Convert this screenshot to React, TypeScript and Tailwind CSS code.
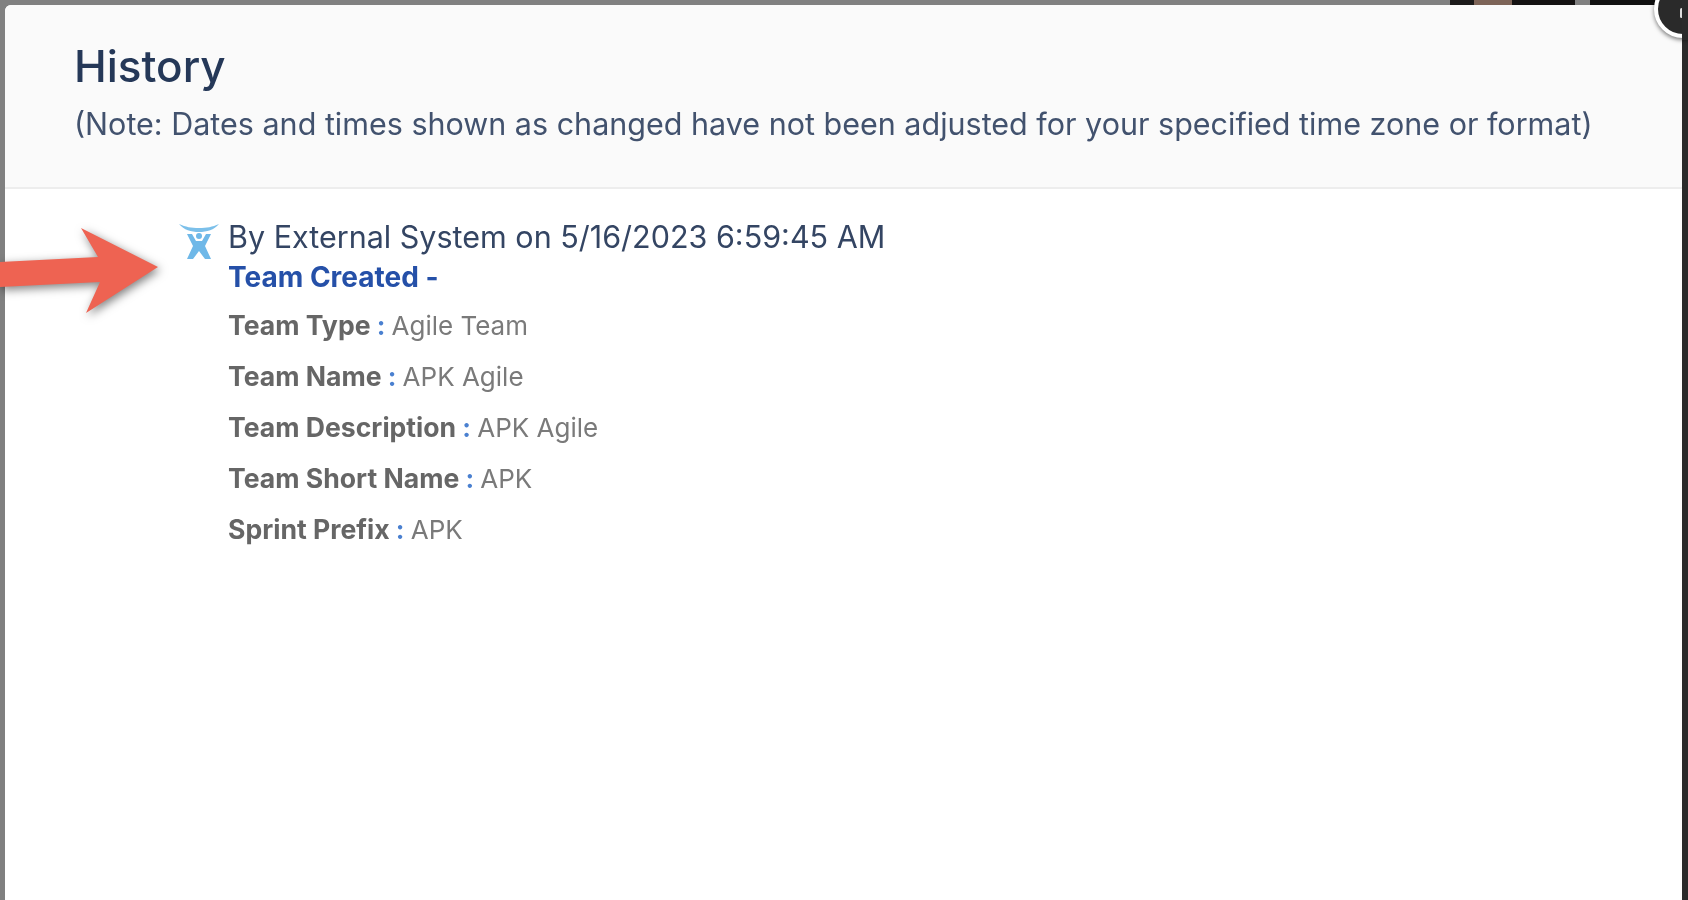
const rows = [
  { label: "Team Type", value: "Agile Team" },
  { label: "Team Name", value: "APK Agile" },
  { label: "Team Description", value: "APK Agile" },
  { label: "Team Short Name", value: "APK" },
  { label: "Sprint Prefix", value: "APK" },
];

function ActorIcon() {
  return (
    <svg viewBox="0 0 42 40" className="mt-[5px] h-[40px] w-[42px] shrink-0" fill="none">
      <path d="M1 2 C8 5 13 6 21 6 C29 6 34 5 41 2 C36 8 29 10 21 10 C13 10 6 8 1 2 Z" fill="#7cc0ea" />
      <path d="M9 12 L14 12 L18 19 L24 19 L28 12 L33 12 L27 24 L33 37 L27 37 L21 29 L15 37 L9 37 L15 24 Z" fill="#6fb8e8" />
      <circle cx="21" cy="14" r="3" fill="#6fb8e8" />
    </svg>
  );
}

function Arrow() {
  return (
    <svg className="absolute left-0 top-[220px] h-[105px] w-[170px] drop-shadow-[2px_3px_5px_rgba(0,0,0,0.5)]" viewBox="0 220 170 105">
      <polygon points="0,262 98,257 81,228 158,267 86,313 100,282 0,287" fill="#ee6352" />
    </svg>
  );
}

export default function App() {
  return (
    <div className="relative flex h-[900px] w-[1688px] flex-col overflow-hidden bg-[#7f7f7f] font-['Inter',sans-serif]">
      {/* Strip of the page behind the modal */}
      <div className="flex h-[5px] shrink-0 bg-[#808080]">
        <div className="ml-[1450px] w-[24px] bg-[#1c1a1a]" />
        <div className="w-[38px] bg-[#7d6458]" />
        <div className="w-[63px] bg-[#141212]" />
        <div className="ml-[15px] w-[65px] bg-[#111111]" />
      </div>

      <div className="flex min-h-0 flex-1">
        <div className="w-[5px] shrink-0 bg-[#808080]" />

        {/* Modal */}
        <div className="flex w-[1677px] flex-col rounded-tl-[6px] bg-white">
          <div className="h-[184px] shrink-0 rounded-tl-[6px] border-b-2 border-[#ededed] bg-[#fafafa] pl-[69px] pt-[35px] blur-[0.6px]">
            <h1 className="text-[44px] leading-[52px] font-medium text-[#253858]">History</h1>
            <p className="mt-[12px] text-[30.5px] leading-[40px] text-[#42526e]">
              (Note: Dates and times shown as changed have not been adjusted for your specified time zone or format)
            </p>
          </div>

          <div className="flex gap-[8px] pl-[173px] pt-[28px] blur-[0.6px]">
            <ActorIcon />
            <div className="flex flex-col">
              <div className="text-[30.5px] leading-[40px] text-[#344563]">By External System on 5/16/2023 6:59:45 AM</div>
              <div className="text-[28px] leading-[40px] font-bold text-[#2550a8]">Team Created -</div>
              <div className="mt-[8px] flex flex-col gap-[11px]">
                {rows.map((row) => (
                  <div key={row.label} className="h-[40px] text-[26px] leading-[40px] text-[#7a7a7a]">
                    <span className="text-[26.6px] font-bold text-[#666666]">{row.label}</span>
                    <span className="font-bold text-[#4a80d0]"> : </span>
                    {row.value}
                  </div>
                ))}
              </div>
            </div>
          </div>
        </div>

        <div className="w-[6px] shrink-0 bg-[#2b2b2b]" />
      </div>

      <Arrow />

      {/* Close button, cut off by the window edge */}
      <div className="absolute left-[1654px] top-[-20px] h-[58px] w-[58px] rounded-full border-[4px] border-white bg-[#2a2a2a] shadow-[0_2px_4px_rgba(0,0,0,0.5)] blur-[0.6px]" />
      <div className="absolute left-[1680px] top-[8px] h-[10px] w-[3px] rounded-sm bg-[#dddddd]" />
      <div className="absolute right-0 top-0 h-[40px] w-[6px] bg-[#2b2b2b]" />
    </div>
  );
}
